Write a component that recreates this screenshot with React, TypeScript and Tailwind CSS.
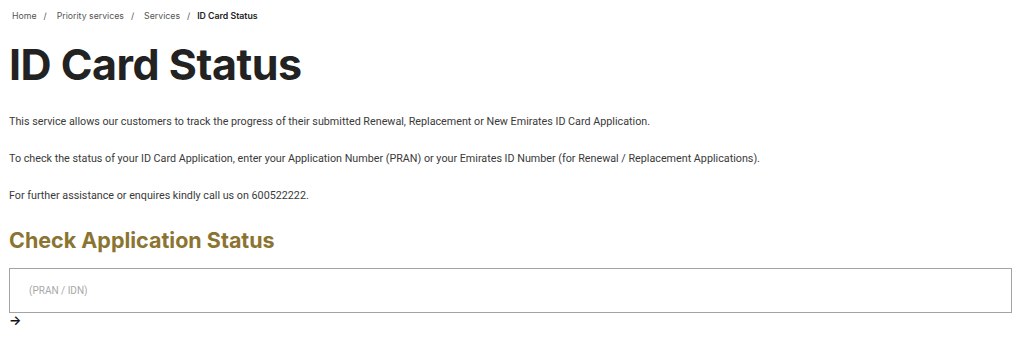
import React from "react";

const crumbs = ["Home", "Priority services", "Services"];

export default function App() {
  return (
    <div className="min-h-[350px] bg-white px-[9px] pt-[9px] text-[#222] [font-family:Inter,'Noto_Sans',sans-serif]">
      {/* Breadcrumb */}
      <nav className="flex items-center text-[8.75px] leading-[14px] text-[#555]">
        {crumbs.map((c) => (
          <React.Fragment key={c}>
            <span className="ml-[3px]">{c}</span>
            <span className="mx-[7px]">/</span>
          </React.Fragment>
        ))}
        <span className="font-semibold text-[#222]">ID Card Status</span>
      </nav>

      <h1 className="mt-[16px] text-[43px] font-bold leading-[50px] tracking-[-0.5px] text-[#222]">
        ID Card Status
      </h1>

      <div className="mt-[26px] flex flex-col gap-[23px] text-[10.75px] leading-[14px] text-[#3a3a3a] [font-family:Roboto,sans-serif]">
        <p>
          This service allows our customers to track the progress of their submitted Renewal, Replacement or New
          Emirates ID Card Application.
        </p>
        <p>
          To check the status of your ID Card Application, enter your Application Number (PRAN) or your Emirates ID
          Number (for Renewal / Replacement Applications).
        </p>
        <p>For further assistance or enquires kindly call us on 600522222.</p>
      </div>

      <h2 className="mt-[23px] text-[21.5px] font-bold leading-[28px] text-[#8b7431]">Check Application Status</h2>

      <div className="mt-[14px] mr-[3px] flex h-[45px] items-center border border-[#a3a3a3] px-[19px]">
        <input
          className="w-full bg-transparent text-[10px] text-[#333] outline-none placeholder:text-[#a8a8a8] [font-family:Roboto,sans-serif]"
          placeholder="(PRAN / IDN)"
        />
      </div>

      <div className="text-[13px] font-semibold leading-[14px] text-[#111]">→</div>
    </div>
  );
}
